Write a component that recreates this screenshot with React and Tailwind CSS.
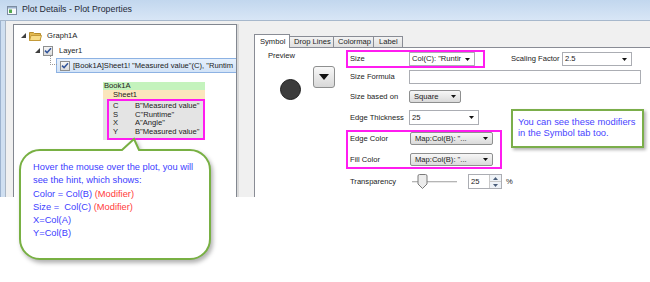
const Expander = () => (
    <svg width="5" height="5" viewBox="0 0 5 5">
        <path d="M5 0 V5 H0 Z" fill="#3f3f3f" />
    </svg>
);

const CheckBox = () => (
    <span className="flex h-[10px] w-[10px] items-center justify-center border border-[#8e8f8f] bg-gradient-to-b from-[#f6f6f6] to-[#dcdcdc]">
        <svg width="8" height="7" viewBox="0 0 8 7">
            <path d="M1 3.6 L3.1 5.6 L7 1.2" fill="none" stroke="#34569a" strokeWidth="1.5" />
        </svg>
    </span>
);

const Arrow = ({ size = 5 }) => (
    <svg width={size} height={size * 0.6} viewBox="0 0 5 3">
        <path d="M0 0 H5 L2.5 3 Z" fill="#111" />
    </svg>
);

const Combo = ({ width, text, height = "h-[14px]" }) => (
    <div
        className={`flex ${height} items-center border border-[#abadb3] bg-white pl-[2px] pr-[4px]`}
        style={{ width }}
    >
        <span className="flex-1 whitespace-nowrap">{text}</span>
        <Arrow />
    </div>
);

const ButtonCombo = ({ width, text, height = "h-[13px]" }) => (
    <div
        className={`flex ${height} items-center rounded-[2px] border border-[#8e8f8f] bg-gradient-to-b from-[#f7f7f7] to-[#dadada] pl-[4px] pr-[4px]`}
        style={{ width }}
    >
        <span className="flex-1 whitespace-nowrap">{text}</span>
        <Arrow />
    </div>
);

const App = () => {
    return (
        <div className="relative h-[282px] w-[650px] overflow-hidden bg-white font-['Liberation_Sans',Arial,sans-serif] text-[7.6px] text-[#1b1b1b]">
            <div className="flex h-[197px] flex-col">
                {/* title bar */}
                <div className="flex h-[21px] items-center border-b border-[#a7b8cc] bg-gradient-to-b from-[#c2d7ee] to-[#d8e6f6] pl-[7px]">
                    <svg width="10" height="9" viewBox="0 0 10 9">
                        <rect x="0.5" y="0.5" width="9" height="8" fill="#f7f9fb" stroke="#7d8da2" />
                        <rect x="1" y="1" width="8" height="1.5" fill="#9db4d0" />
                        <rect x="2" y="3.5" width="3" height="3.5" fill="#53a84f" />
                    </svg>
                    <span className="ml-[5px] text-[8.8px] text-[#1f2a38]">
                        Plot Details - Plot Properties
                    </span>
                </div>

                <div className="flex flex-1">
                    {/* left frame */}
                    <div className="w-[5px] border-l border-[#9db3cf] bg-[#cfdff1]" />

                    <div className="flex flex-1 border-l border-[#aab6c4] bg-[#f0f0f0] pl-[7px] pt-[3px]">
                        {/* tree */}
                        <div className="flex w-[224px] flex-col overflow-hidden border border-b-0 border-[#828790] bg-white">
                            <div className="mt-[3px] flex h-[15px] items-center pl-[7px]">
                                <Expander />
                                <svg className="ml-[3px]" width="13" height="10" viewBox="0 0 13 10">
                                    <path d="M0.5 1.5 H4.5 L5.5 2.5 H11.5 V9.5 H0.5 Z" fill="#e3b94f" stroke="#b58c2c" />
                                    <path d="M0.5 9.5 L2 4.5 H12.5 L11 9.5 Z" fill="#f8dc86" stroke="#c49a3a" />
                                </svg>
                                <span className="ml-[5px]">Graph1A</span>
                            </div>
                            <div className="flex h-[15px] items-center pl-[21px]">
                                <Expander />
                                <span className="ml-[3px]">
                                    <CheckBox />
                                </span>
                                <span className="ml-[6px]">Layer1</span>
                            </div>
                            <div className="relative flex h-[15px] items-center pl-[42px]">
                                <span className="absolute left-[36px] top-[-2px] h-[9px] w-[7px] border-b border-l border-dotted border-[#9a9a9a]" />
                                <div className="flex h-[15px] min-w-0 flex-1 items-center overflow-hidden border border-r-0 border-[#8db2e3] bg-gradient-to-b from-[#e6f0fc] to-[#d2e3f7] pl-[3px]">
                                    <CheckBox />
                                    <span className="ml-[3px] whitespace-nowrap">
                                        [Book1A]Sheet1! "Measured value"(C), "Runtim
                                    </span>
                                </div>
                            </div>

                            {/* hint table */}
                            <div className="ml-[89px] mt-[9px] w-[102px] leading-[8.7px]">
                                <div className="h-[8px] bg-[#c4f3bd] pl-[1px] leading-[8px]">Book1A</div>
                                <div className="h-[9px] bg-[#fbe6bd] pl-[10px] leading-[9px]">Sheet1</div>
                                <div className="bg-[#e4e4e4] pl-[4px]">
                                    <div className="border-2 border-[#ff1cf0] py-[1px]">
                                        {[
                                            ["C", 'B"Measured value"'],
                                            ["S", 'C"Runtime"'],
                                            ["X", 'A"Angle"'],
                                            ["Y", 'B"Measured value"'],
                                        ].map((r) => (
                                            <div key={r[0]} className="flex">
                                                <span className="w-[26px] pl-[4px]">{r[0]}</span>
                                                <span>{r[1]}</span>
                                            </div>
                                        ))}
                                    </div>
                                </div>
                            </div>
                        </div>

                        {/* splitter */}
                        <div className="w-[2px] bg-[#d9d9d9]" />
                        <div className="w-[15px]" />

                        {/* tab control */}
                        <div className="flex flex-1 flex-col pt-[10px]">
                            <div className="flex h-[13px] items-end">
                                <div className="relative z-10 -mb-px flex h-[14px] w-[36px] items-center border border-b-0 border-[#898c95] bg-white pl-[5px]">
                                    Symbol
                                </div>
                                <div className="-ml-px flex h-[11px] w-[45px] items-center border border-b-0 border-[#898c95] bg-gradient-to-b from-[#f3f3f3] to-[#e0e0e0] pl-[4px]">
                                    Drop Lines
                                </div>
                                <div className="-ml-px flex h-[11px] w-[41px] items-center border border-b-0 border-[#898c95] bg-gradient-to-b from-[#f3f3f3] to-[#e0e0e0] pl-[4px]">
                                    Colormap
                                </div>
                                <div className="-ml-px flex h-[11px] w-[30px] items-center border border-b-0 border-[#898c95] bg-gradient-to-b from-[#f3f3f3] to-[#e0e0e0] pl-[5px]">
                                    Label
                                </div>
                            </div>

                            <div className="flex flex-1 border-l border-t border-[#898c95] bg-white">
                                {/* preview */}
                                <div className="flex w-[91px] flex-col">
                                    <div className="pl-[13px] pt-[3px] leading-[10px]">Preview</div>
                                    <div className="mt-[5px] flex items-start">
                                        <div className="ml-[25px] mt-[13px] h-[21px] w-[21px] rounded-full border border-[#1e1e1e] bg-[#3c3c3c]" />
                                        <div className="ml-[12px] flex h-[22px] w-[22px] items-center justify-center rounded-[3px] border border-[#8e8f8f] bg-gradient-to-b from-[#f8f8f8] to-[#d8d8d8]">
                                            <Arrow size={10} />
                                        </div>
                                    </div>
                                </div>

                                {/* form */}
                                <div className="flex flex-col pt-[2px]">
                                    <div className="flex h-[18px] items-center">
                                        <div className="flex h-[18px] w-[139px] items-center border-2 border-[#ff1cf0]">
                                            <span className="w-[61px] pl-[2px]">Size</span>
                                            <Combo width={66} text={'Col(C): "Runtir'} />
                                        </div>
                                        <span className="ml-[26px] w-[51px]">Scaling Factor</span>
                                        <Combo width={70} text="2.5" />
                                    </div>

                                    <div className="mt-[2px] flex h-[14px] items-center">
                                        <span className="w-[63px] pl-[4px]">Size Formula</span>
                                        <div className="h-[14px] w-[232px] border border-[#abadb3] bg-white" />
                                    </div>

                                    <div className="mt-[6px] flex h-[13px] items-center">
                                        <span className="w-[63px] pl-[4px]">Size based on</span>
                                        <ButtonCombo width={52} text="Square" />
                                    </div>

                                    <div className="mt-[7px] flex h-[15px] items-center">
                                        <span className="w-[63px] pl-[4px]">Edge Thickness</span>
                                        <Combo width={70} text="25" height="h-[15px]" />
                                    </div>

                                    <div className="mt-[5px] flex h-[39px] w-[156px] flex-col border-2 border-[#ff1cf0]">
                                        <div className="flex h-[13px] items-center">
                                            <span className="w-[62px] pl-[2px]">Edge Color</span>
                                            <ButtonCombo width={83} text={'Map:Col(B): "...'} />
                                        </div>
                                        <div className="mt-[8px] flex h-[13px] items-center">
                                            <span className="w-[62px] pl-[2px]">Fill Color</span>
                                            <ButtonCombo width={83} text={'Map:Col(B): "...'} />
                                        </div>
                                    </div>

                                    <div className="mt-[5px] flex h-[15px] items-center">
                                        <span className="w-[66px] pl-[4px]">Transparency</span>
                                        <div className="relative h-[15px] w-[45px]">
                                            <div className="absolute left-0 right-0 top-[7px] h-[2px] border-t border-[#b5b5b5] bg-[#e7e7e7]" />
                                            <svg className="absolute left-[5px] top-0" width="11" height="15" viewBox="0 0 11 15">
                                                <path d="M1 2 Q1 0.5 2.5 0.5 H8.5 Q10 0.5 10 2 V10 L5.5 14.5 L1 10 Z" fill="#ececec" stroke="#7a7a7a" />
                                            </svg>
                                        </div>
                                        <div className="ml-[11px] flex h-[15px] w-[34px] items-center border border-[#abadb3] bg-white">
                                            <span className="flex-1 pl-[2px]">25</span>
                                            <div className="flex h-full w-[12px] flex-col border-l border-[#c9c9c9]">
                                                <div className="flex flex-1 items-center justify-center bg-[#eef2f7]">
                                                    <svg width="5" height="3" viewBox="0 0 5 3"><path d="M0 3 H5 L2.5 0 Z" fill="#4a5d7a" /></svg>
                                                </div>
                                                <div className="flex flex-1 items-center justify-center border-t border-[#c9c9c9] bg-[#eef2f7]">
                                                    <svg width="5" height="3" viewBox="0 0 5 3"><path d="M0 0 H5 L2.5 3 Z" fill="#4a5d7a" /></svg>
                                                </div>
                                            </div>
                                        </div>
                                        <span className="ml-[4px]">%</span>
                                    </div>
                                </div>
                            </div>
                        </div>
                    </div>
                </div>
            </div>

            {/* callout bubble */}
            <div className="absolute left-[18px] top-[137px] h-[128px] w-[198px]">
                <svg
                    className="absolute inset-0 drop-shadow-[2px_3px_2px_rgba(0,0,0,0.3)]"
                    width="198"
                    height="128"
                    viewBox="0 0 198 128"
                >
                    <path
                        d="M22 13 H104 L116 2 L121 13 H172 A20 20 0 0 1 192 33 V102 A20 20 0 0 1 172 122 H22 A20 20 0 0 1 2 102 V33 A20 20 0 0 1 22 13 Z"
                        fill="#ffffff"
                        stroke="#78b043"
                        strokeWidth="2"
                    />
                </svg>
                <div className="absolute left-[15px] top-[24px] text-[9.3px] leading-[13.3px] text-[#4040ff]">
                    <div>Hover the mouse over the plot, you will</div>
                    <div>see the hint, which shows:</div>
                    <div>
                        Color = Col(B) <span className="text-[#ff3b3b]">(Modifier)</span>
                    </div>
                    <div>
                        Size = &nbsp;Col(C) <span className="text-[#ff3b3b]">(Modifier)</span>
                    </div>
                    <div>X=Col(A)</div>
                    <div>Y=Col(B)</div>
                </div>
            </div>

            {/* note box */}
            <div className="absolute left-[511px] top-[109px] h-[39px] w-[133px] border-2 border-[#7bae4a] bg-white pl-[5px] pt-[5px] text-[9.4px] leading-[11px] text-[#4a45ff] shadow-[2px_2px_3px_rgba(0,0,0,0.3)]">
                <div>You can see these modifiers</div>
                <div>in the Symbol tab too.</div>
            </div>
        </div>
    );
};

export default App;
